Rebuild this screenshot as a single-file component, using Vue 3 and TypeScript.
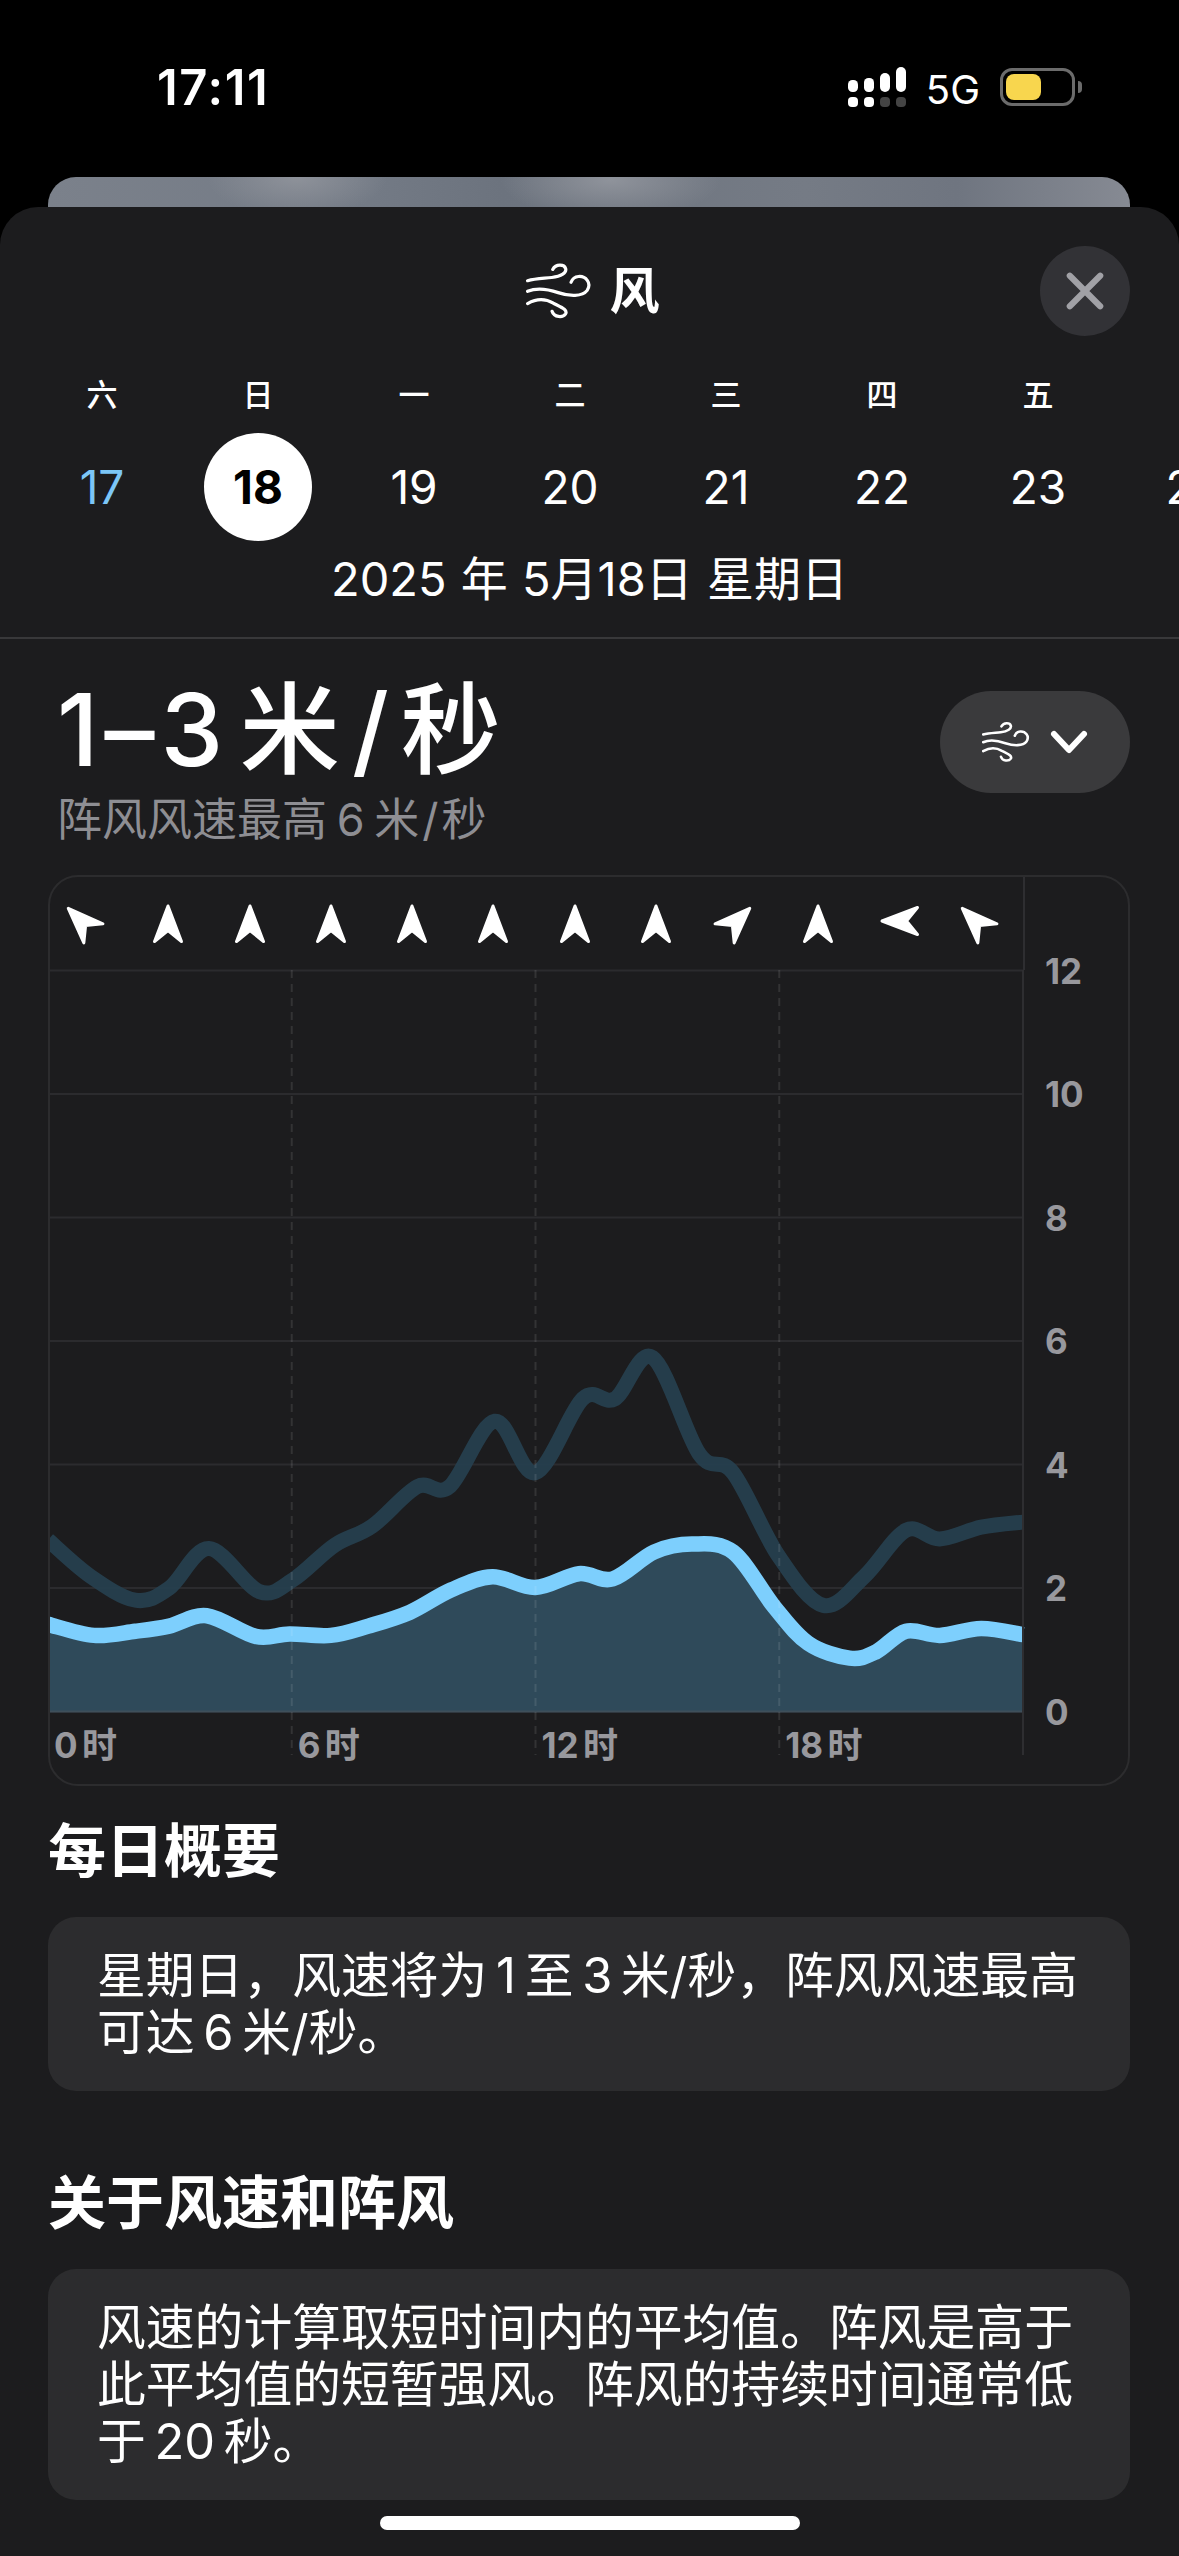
<template>
  <div class="screen">
    <header class="status">
      <span class="time">17:11</span>
      <div class="status-right">
        <svg class="signal" width="60" height="42" viewBox="846 66 60 42">
          <rect x="846" y="80" width="10" height="12" rx="4.5" fill="#fff" />
          <rect x="862" y="78" width="10" height="14" rx="4.5" fill="#fff" />
          <rect x="878" y="73" width="10" height="19" rx="5" fill="#fff" />
          <rect x="894" y="67" width="10" height="25" rx="5" fill="#fff" />
          <rect x="846" y="97" width="10" height="10" rx="4" fill="#fff" />
          <rect x="862" y="97" width="10" height="10" rx="4" fill="#fff" />
          <rect x="878" y="97" width="10" height="10" rx="4" fill="#444" />
          <rect x="894" y="97" width="10" height="10" rx="4" fill="#444" />
        </svg>
        <span class="net">5G</span>
        <div class="battery">
          <div class="battery-fill"></div>
        </div>
        <div class="battery-nub"></div>
      </div>
    </header>

    <div class="backdrop"></div>

    <main class="sheet">
      <div class="title-row">
        <span></span>
        <div class="title">
          <svg width="66" height="58" viewBox="135 98 205 178" fill="none" stroke="#fff" stroke-width="10" stroke-linecap="round">
            <path v-for="d in windPaths" :key="d" :d="d" />
          </svg>
          <span>风</span>
        </div>
        <button class="close">
          <svg width="38" height="38" viewBox="0 0 40 40" stroke="#a1a1a6" stroke-width="6.5" stroke-linecap="round">
            <path d="M4 4 L36 36 M36 4 L4 36" />
          </svg>
        </button>
      </div>

      <div class="week">
        <span v-for="(w, i) in weekdays" :key="i" class="week-cell">{{ w }}</span>
      </div>
      <div class="days">
        <div v-for="d in days" :key="d" class="day-cell">
          <span class="day" :class="{ past: d === 17, selected: d === 18 }">{{ d }}</span>
        </div>
      </div>
      <div class="date">2025 年 5月18日 星期日</div>

      <section class="summary">
        <div>
          <h1 class="range"><span class="range-num">1–3</span> 米<span class="slash">/</span>秒</h1>
          <p class="gust">阵风风速最高 6 米<span class="slash-sm">/</span>秒</p>
        </div>
        <button class="pill">
          <svg width="48" height="42" viewBox="135 98 205 178" fill="none" stroke="#fff" stroke-width="11" stroke-linecap="round">
            <path v-for="d in windPaths" :key="d" :d="d" />
          </svg>
          <svg width="38" height="24" viewBox="0 0 38 24" fill="none" stroke="#fff" stroke-width="6" stroke-linecap="round" stroke-linejoin="round">
            <path d="M4 4 L19 20 L34 4" />
          </svg>
        </button>
      </section>

      <section class="chart">
        <div class="arrows">
          <div v-for="(a, i) in arrows" :key="i" class="arrow-cell">
            <svg width="32" height="42" viewBox="0 0 32 42" :style="{ transform: arrowTransform(a) }">
              <path d="M16 3 L29.5 38.5 L16 27.5 L2.5 38.5 Z" fill="#fff" stroke="#fff" stroke-width="3" stroke-linejoin="round" />
            </svg>
          </div>
        </div>
        <svg class="plot" width="1078" height="814" viewBox="50 970 1078 814">
          <line v-for="v in gridValues" :key="v" x1="48" x2="1023" :y1="yOf(v)" :y2="yOf(v)" stroke="#2b2b2e" stroke-width="2" />
          <path :d="gustPath" fill="none" stroke="#26404f" stroke-opacity="0.92" stroke-width="15" />
          <path :d="fillPath" fill="#2f4a5a" />
          <path :d="windPath" fill="none" stroke="#7dcffd" stroke-width="15.5" />
          <line x1="48" x2="1023" y1="1711.5" y2="1711.5" stroke="#3f4f5a" stroke-width="2" />
          <line v-for="x in dashXs" :key="x" :x1="x" :x2="x" y1="970" y2="1755" stroke="#fff" stroke-opacity="0.1" stroke-width="2" stroke-dasharray="8 6" />
          <line x1="1023" x2="1023" y1="970" y2="1755" stroke="#2e2e31" stroke-width="2" />
          <text v-for="v in gridValues" :key="'y' + v" x="1045" :y="yOf(v) + 13" class="axis">{{ v }}</text>
          <text v-for="(h, i) in hourLabels" :key="h" :x="54 + i * 243.75" y="1758" class="axis">{{ h }}</text>
        </svg>
      </section>

      <h2 class="heading first">每日概要</h2>
      <div class="note">星期日，风速将为 1 至 3 米/秒，阵风风速最高<br />可达 6 米/秒。</div>

      <h2 class="heading second">关于风速和阵风</h2>
      <div class="note">风速的计算取短时间内的平均值。阵风是高于<br />此平均值的短暂强风。阵风的持续时间通常低<br />于 20 秒。</div>

      <div class="home"></div>
    </main>
  </div>
</template>

<script setup lang="ts">
type Pt = [number, number];

const weekdays = ["六", "日", "一", "二", "三", "四", "五", "六"];
const days = [17, 18, 19, 20, 21, 22, 23, 24];
const arrows = [-45, 0, 0, 0, 0, 0, 0, 0, 45, 0, -90, -45];
const gridValues = [0, 2, 4, 6, 8, 10, 12];
const dashXs = [291.75, 535.5, 779.25];
const hourLabels = ["0 时", "6 时", "12 时", "18 时"];

const windPaths = [
  "M140 155 C165 148 190 148 215 145 C245 142 262 130 258 117 C254 104 228 102 218 120",
  "M140 188 C170 175 200 180 235 192 C270 204 310 205 325 185 C340 162 320 140 298 142 C285 143 278 152 275 160",
  "M140 226 C165 212 195 210 220 225 C245 238 265 245 258 258 C250 270 222 270 216 250",
];

// traced from the chart, in zoomed crop units
const windRaw: Pt[] = [
  [64, 1000], [125, 1032], [180, 1020], [225, 1005], [275, 975], [340, 1035], [385, 1028],
  [440, 1032], [490, 1005], [545, 965], [600, 900], [655, 862], [712, 893], [770, 853],
  [815, 868], [870, 790], [920, 767], [975, 790], [1030, 950], [1075, 1055], [1130, 1098],
  [1165, 1080], [1205, 1020], [1250, 1032], [1305, 1012], [1361, 1030],
];
const gustRaw: Pt[] = [
  [64, 755], [120, 860], [180, 930], [225, 895], [278, 780], [345, 905], [390, 870],
  [445, 770], [495, 715], [555, 600], [598, 600], [658, 410], [712, 560], [775, 345],
  [818, 345], [868, 225], [930, 505], [975, 560], [1035, 800], [1095, 945], [1150, 860],
  [1205, 727], [1250, 752], [1305, 718], [1361, 703],
];

function yOf(v: number) {
  return 1711.5 - v * 61.75;
}

function arrowTransform(a: number) {
  const dx = a === -45 ? -6 : 0;
  const dy = a === 0 ? 0 : -3;
  return `translate(${dx}px, ${dy}px) rotate(${a}deg)`;
}

function toPage(p: Pt): Pt {
  return [p[0] / 1.33, 1280 + p[1] / 2.904];
}

function smooth(raw: Pt[]) {
  const pts = raw.map(toPage);
  let d = `M${pts[0][0]} ${pts[0][1]}`;
  for (let i = 0; i < pts.length - 1; i++) {
    const a = pts[Math.max(i - 1, 0)];
    const b = pts[i];
    const c = pts[i + 1];
    const e = pts[Math.min(i + 2, pts.length - 1)];
    const c1x = b[0] + (c[0] - a[0]) / 6;
    const c1y = b[1] + (c[1] - a[1]) / 6;
    const c2x = c[0] - (e[0] - b[0]) / 6;
    const c2y = c[1] - (e[1] - b[1]) / 6;
    d += ` C${c1x.toFixed(1)} ${c1y.toFixed(1)} ${c2x.toFixed(1)} ${c2y.toFixed(1)} ${c[0].toFixed(1)} ${c[1].toFixed(1)}`;
  }
  return d;
}

const windPath = smooth(windRaw);
const gustPath = smooth(gustRaw);
const fillPath = `${windPath} L1023 1711.5 L48 1711.5 Z`;
</script>

<style>
html,
body {
  background: #000;
}
</style>

<style scoped>
.screen {
  width: 1179px;
  height: 2556px;
  overflow: hidden;
  background: #000;
  color: #fff;
  font-family: Inter, "Noto Sans CJK SC", sans-serif;
}

.status {
  height: 177px;
  display: flex;
  justify-content: space-between;
  box-sizing: border-box;
  padding: 66px 97px 0 157px;
}

.time {
  font-size: 49px;
  font-weight: 600;
  line-height: 44px;
  letter-spacing: 1.6px;
}

.status-right {
  display: flex;
  align-items: flex-start;
  height: 42px;
}

.signal {
  display: block;
}

.net {
  font-size: 40px;
  line-height: 42px;
  margin: 3px 0 0 18px;
}

.battery {
  width: 75px;
  height: 38px;
  box-sizing: border-box;
  margin: 2px 0 0 20px;
  border: 3px solid #6b6b6b;
  border-radius: 12px;
  padding: 3px;
}

.battery-fill {
  width: 35px;
  height: 26px;
  border-radius: 8px;
  background: #f8d64e;
}

.battery-nub {
  width: 4px;
  height: 12px;
  margin: 15px 0 0 3px;
  background: #6b6b6b;
  border-radius: 0 4px 4px 0;
}

.backdrop {
  height: 30px;
  margin: 0 49px 0 48px;
  border-radius: 28px 28px 0 0;
  background:
    radial-gradient(ellipse 90px 40px at 23% 0%, #8e929a 0%, transparent 100%),
    radial-gradient(ellipse 110px 40px at 52% 10%, #8f939b 0%, transparent 100%),
    linear-gradient(90deg, #7b818b 0%, #737a85 30%, #6c737e 42%, #757b85 70%, #6f7580 84%, #868a93 100%);
}

.sheet {
  height: 2349px;
  background: #1c1c1e;
  border-radius: 38px 38px 0 0;
}

.title-row {
  display: grid;
  grid-template-columns: 90px 1fr 90px;
  align-items: center;
  padding: 39px 49px 0;
}

.title {
  display: flex;
  align-items: center;
  justify-content: center;
  gap: 18px;
  margin-left: 6px;
  font-size: 50px;
  font-weight: 600;
  line-height: 90px;
}

.close {
  width: 90px;
  height: 90px;
  border: 0;
  border-radius: 50%;
  background: #323236;
  display: flex;
  align-items: center;
  justify-content: center;
  padding: 0;
}

.week,
.days {
  display: flex;
  padding-left: 24px;
  width: 1400px;
}

.week {
  margin-top: 39px;
}

.week-cell {
  width: 156px;
  text-align: center;
  font-size: 31px;
  line-height: 40px;
  font-weight: 500;
}

.days {
  margin-top: 18px;
}

.day-cell {
  width: 156px;
  display: flex;
  justify-content: center;
}

.day {
  width: 108px;
  height: 108px;
  border-radius: 50%;
  display: flex;
  align-items: center;
  justify-content: center;
  font-size: 46px;
}

.day.past {
  color: #7cc6f7;
}

.day.selected {
  background: #fff;
  color: #000;
  font-weight: 700;
}

.date {
  margin-top: 8px;
  padding-bottom: 28px;
  text-align: center;
  font-size: 47px;
  line-height: 60px;
  word-spacing: 1px;
  border-bottom: 2px solid #38383a;
}

.summary {
  display: flex;
  justify-content: space-between;
  align-items: flex-start;
  padding: 36px 49px 0 57px;
}

.range {
  margin: 0;
  font-size: 100px;
  line-height: 110px;
  font-weight: 500;
  word-spacing: -16px;
}

.range-num {
  letter-spacing: 6px;
}

.slash {
  margin: 0 12px;
}

.gust {
  margin: 7px 0 0;
  font-size: 45px;
  line-height: 56px;
  color: #8e8e93;
  word-spacing: -3px;
}

.slash-sm {
  margin: 0 3px;
}

.pill {
  width: 190px;
  height: 102px;
  margin-top: 16px;
  border: 0;
  border-radius: 51px;
  background: #3a3a3c;
  display: flex;
  align-items: center;
  justify-content: center;
  gap: 20px;
  padding: 0;
}

.chart {
  box-sizing: border-box;
  width: 1082px;
  height: 911px;
  margin: 27px 0 0 48px;
  border: 2px solid #2c2c2e;
  border-radius: 30px;
  overflow: hidden;
}

.arrows {
  display: grid;
  grid-template-columns: repeat(12, 81.25px);
  width: 975px;
  height: 93px;
  margin-left: -2px;
  border-right: 2px solid #2e2e31;
}

.arrow-cell {
  display: flex;
  align-items: center;
  justify-content: center;
  margin-left: -3px;
}

.plot {
  display: block;
  overflow: visible;
}

.axis {
  font-size: 35px;
  font-weight: 700;
  fill: #98989d;
  word-spacing: -4px;
  font-family: Inter, "Noto Sans CJK SC", sans-serif;
}

.heading {
  margin: 0 0 0 48px;
  font-size: 58px;
  line-height: 70px;
  font-weight: 600;
}

.heading.first {
  margin-top: 30px;
}

.heading.second {
  margin-top: 77px;
}

.note {
  margin: 31px 49px 0 48px;
  padding: 30px 0 30px 49px;
  border-radius: 28px;
  background: #2c2c2e;
  font-size: 48.8px;
  line-height: 57px;
  word-spacing: -5px;
  white-space: nowrap;
}

.home {
  width: 420px;
  height: 14px;
  margin: 16px auto 0;
  border-radius: 7px;
  background: #fff;
}
</style>
